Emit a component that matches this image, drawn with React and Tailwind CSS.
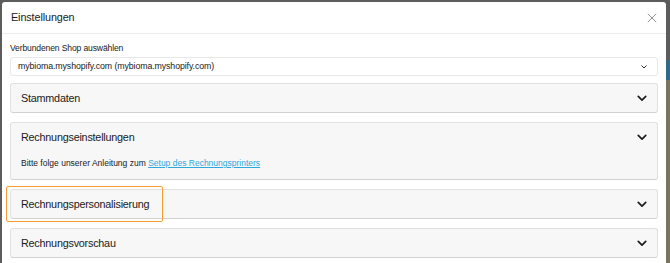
import React from "react";

function Chevron({ className = "" }) {
  return (
    <svg viewBox="0 0 12 8" className={className} fill="none" stroke="currentColor" strokeWidth="2" strokeLinecap="round" strokeLinejoin="round">
      <path d="M1.5 1.5 6 6l4.5-4.5" />
    </svg>
  );
}

function Section({ title, children, highlight }) {
  return (
    <div className="relative">
      {highlight && (
        <div className="absolute left-[-4px] top-[-3px] w-[157px] h-[36px] border-[1.5px] border-[#f59e2f] rounded-[2px] pointer-events-none z-10" />
      )}
      <div className="bg-[#f7f7f7] border border-[#e1e1e1] border-b-[#d2d2d2] rounded-[3px]">
        <div className="flex items-center justify-between h-[28px] pl-[10px] pr-[10px]">
          <span className="text-[10.8px] tracking-[-0.22px] text-[#1a1a1a]">{title}</span>
          <Chevron className="w-[10px] h-[7px] text-[#1a1a1a]" />
        </div>
        {children}
      </div>
    </div>
  );
}

export default function App() {
  return (
    <div className="w-[670px] h-[263px] bg-[#5c5c5c] overflow-hidden relative" style={{ fontFamily: '"Liberation Sans", Arial, sans-serif' }}>
      <div className="absolute right-0 top-[60px] w-[4px] h-[20px] bg-[#2f6a86]" />
      <div className="absolute right-0 top-[80px] w-[4px] h-[183px] bg-[#79745c]" />
      <div className="absolute left-[2px] top-[2px] w-[664px] h-[270px] bg-white rounded-[3px]">
        <div className="flex items-center justify-between h-[32px] pl-[9px] pr-[9px] border-b border-[#ececec]">
          <span className="text-[10.8px] text-[#1a1a1a] tracking-[-0.1px]">Einstellungen</span>
          <svg viewBox="0 0 12 12" className="w-[10px] h-[10px] text-[#888]" fill="none" stroke="currentColor" strokeWidth="1.1">
            <path d="M1 1l10 10M11 1 1 11" />
          </svg>
        </div>
        <div className="px-[8px] pt-[9px]">
          <div className="text-[8.6px] tracking-[-0.15px] text-[#1a1a1a] leading-[10px] mb-[4px]">Verbundenen Shop auswählen</div>
          <div className="flex items-center justify-between h-[19px] border border-[#e8e8e8] rounded-[3px] pl-[7px] pr-[10px]">
            <span className="text-[8.8px] tracking-[-0.1px] text-[#1a1a1a]">mybioma.myshopify.com (mybioma.myshopify.com)</span>
            <Chevron className="w-[6px] h-[4px] text-[#333]" />
          </div>
          <div className="flex flex-col gap-[9px] mt-[7px]">
            <Section title="Stammdaten" />
            <Section title="Rechnungseinstellungen">
              <div className="pl-[10px] pt-[7px] pb-[10px] text-[8.5px] leading-[11px] text-[#1a1a1a]">
                Bitte folge unserer Anleitung zum{" "}
                <span className="text-[#2ea8dc] underline">Setup des Rechnungsprinters</span>
              </div>
            </Section>
            <Section title="Rechnungspersonalisierung" highlight />
            <Section title="Rechnungsvorschau" />
          </div>
        </div>
      </div>
    </div>
  );
}
